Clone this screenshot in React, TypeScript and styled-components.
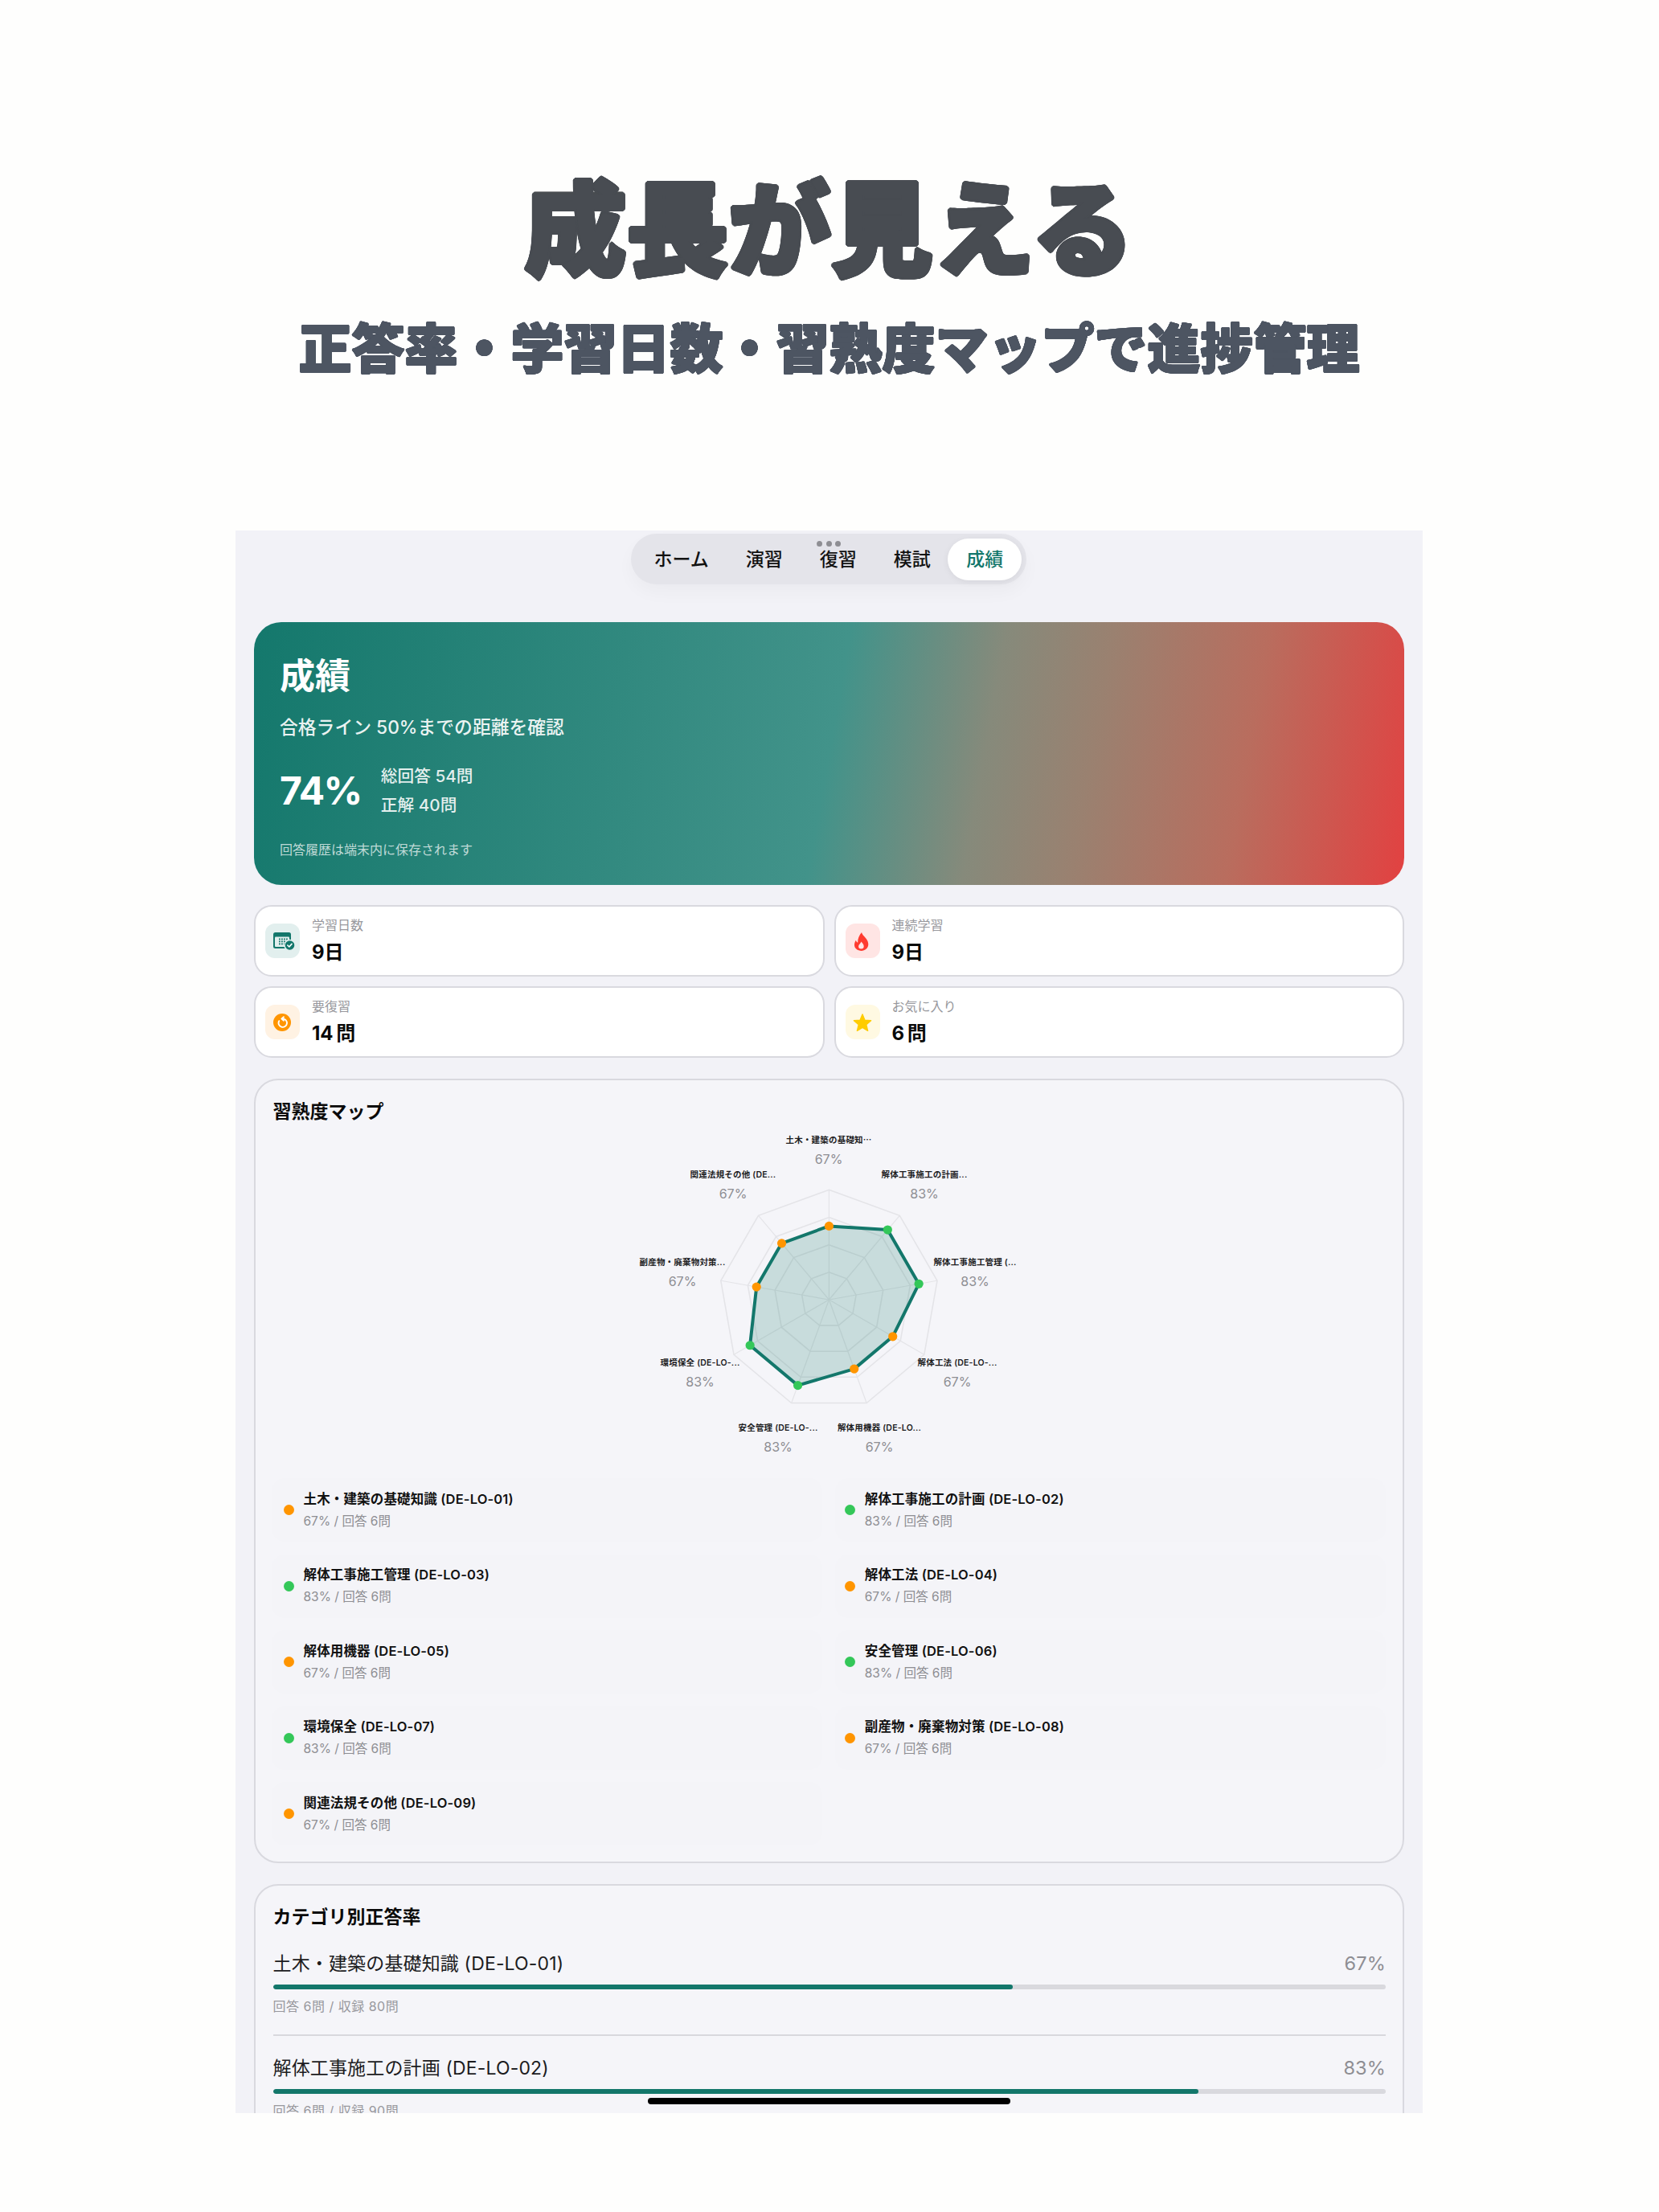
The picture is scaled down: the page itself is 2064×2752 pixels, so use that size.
import React from "react";
import styled, { createGlobalStyle } from "styled-components";

const FONT = `Inter, "Noto Sans CJK JP", sans-serif`;
const TEAL = "#13776b";
const GREEN = "#34c759";
const ORANGE = "#ff9500";

const ring = (r: number, color: string, n = 24) =>
  Array.from({ length: n }, (_, i) => {
    const a = (i / n) * Math.PI * 2;
    return `${(r * Math.cos(a)).toFixed(2)}px ${(r * Math.sin(a)).toFixed(2)}px 0 ${color}`;
  }).join(", ");

const Global = createGlobalStyle`
  html, body { margin: 0; padding: 0; background: #fefefd; }
  body { font-family: ${FONT}; color: #000; }
  * { box-sizing: border-box; }
`;

const Page = styled.div`
  width: 2064px;
  height: 2752px;
  padding-left: 293px;
  overflow: hidden;
`;
const Hero = styled.header`
  width: 1477px;
  height: 660px;
  padding-top: 208px;
  text-align: center;
  font-family: "Noto Sans CJK JP", sans-serif;
`;
const Headline = styled.h1`
  margin: 0;
  font-size: 127px;
  line-height: 140px;
  font-weight: 900;
  color: #484c52;
  text-shadow: ${ring(2.8, "#484c52")};
`;
const Subline = styled.h2`
  margin: 41px 0 0;
  font-size: 66px;
  line-height: 80px;
  font-weight: 900;
  color: #4d5562;
  text-shadow: ${ring(1.1, "#4d5562", 16)};
`;
const Screen = styled.main`
  position: relative;
  width: 1477px;
  height: 1969px;
  background: #f2f2f7;
  padding: 4px 23px 0 23px;
  overflow: hidden;
`;
const TabBar = styled.nav`
  position: relative;
  display: inline-flex;
  align-items: center;
  height: 63px;
  margin-left: 469px;
  padding: 0 6px 0 5.5px;
  border-radius: 32px;
  background: #e4e4ea;
  box-shadow: 0 10px 22px rgba(0, 0, 0, 0.03);
  vertical-align: top;
`;
const Tab = styled.span<{ $active?: boolean }>`
  display: block;
  height: 52px;
  margin-left: ${(p) => (p.$active ? "-1.5px" : "0")};
  padding: 0 23px;
  line-height: 52px;
  font-size: 23px;
  font-weight: 500;
  border-radius: 26px;
  color: ${(p) => (p.$active ? TEAL : "#111")};
  background: ${(p) => (p.$active ? "#fff" : "transparent")};
  box-shadow: ${(p) => (p.$active ? "0 2px 8px rgba(0,0,0,.06)" : "none")};
`;
const Dots = styled.span`
  position: absolute;
  left: 231px;
  top: 9px;
  display: flex;
  gap: 4.5px;
`;
const Dot = styled.i`
  width: 7px;
  height: 7px;
  border-radius: 50%;
  background: #8e8e93;
`;
const Banner = styled.section`
  margin-top: 47px;
  height: 327px;
  padding: 32px 32px;
  border-radius: 34px;
  color: #fff;
  background: linear-gradient(100deg, #14786c 0%, #42938a 50%, #868a7b 63%, #9a8170 72%, #b96d5e 85%, #e24141 100%);
`;
const BannerTitle = styled.h1`
  margin: 0;
  font-size: 44px;
  line-height: 70px;
  font-weight: 700;
`;
const BannerSub = styled.p`
  margin: 12px 0 0;
  font-size: 22.8px;
  line-height: 34px;
  font-weight: 500;
  color: rgba(255, 255, 255, 0.92);
`;
const BannerStats = styled.div`
  display: flex;
  align-items: center;
  gap: 24px;
  margin-top: 26px;
`;
const BigRate = styled.div`
  font-size: 48px;
  line-height: 72px;
  font-weight: 700;
  letter-spacing: -1.5px;
`;
const BannerCounts = styled.div`
  font-size: 20.7px;
  line-height: 36px;
  font-weight: 500;
  color: rgba(255, 255, 255, 0.88);
`;
const BannerNote = styled.p`
  margin: 25px 0 0;
  font-size: 16px;
  line-height: 24px;
  color: rgba(255, 255, 255, 0.72);
`;
const StatGrid = styled.section`
  display: grid;
  grid-template-columns: 1fr 1fr;
  gap: 12px;
  margin-top: 25px;
`;
const StatCard = styled.div`
  display: flex;
  align-items: center;
  gap: 15px;
  height: 89px;
  padding: 0 12px;
  background: #fff;
  border: 2px solid #d9d9df;
  border-radius: 22px;
`;
const IconBox = styled.div<{ $bg: string }>`
  flex: none;
  width: 43px;
  height: 43px;
  border-radius: 12px;
  background: ${(p) => p.$bg};
  svg {
    display: block;
  }
`;
const StatLabel = styled.div`
  font-size: 16px;
  line-height: 24px;
  color: #98989d;
`;
const StatValue = styled.div`
  margin-top: 5px;
  font-size: 24px;
  line-height: 34px;
  font-weight: 700;
  word-spacing: -2px;
  color: #0a0a0a;
`;
const Panel = styled.section`
  margin-top: 26px;
  padding: 24px 21px 20px 21.5px;
  background: #f5f5f9;
  border: 2px solid #d9d9df;
  border-radius: 30px;
`;
const PanelTitle = styled.h2`
  margin: 0;
  font-size: 23px;
  line-height: 30px;
  font-weight: 600;
  color: #0a0a0a;
`;
const RadarSvg = styled.svg`
  display: block;
  width: 540px;
  height: 441px;
  margin-left: 420.5px;
`;
const AxisName = styled.text`
  font-family: ${FONT};
  font-size: 10.5px;
  font-weight: 600;
  letter-spacing: 0.2px;
  fill: #1c1c1e;
  text-anchor: middle;
  dominant-baseline: central;
`;
const AxisRate = styled.text`
  font-family: ${FONT};
  font-size: 16px;
  fill: #8e8e93;
  text-anchor: middle;
  dominant-baseline: central;
`;
const TopicGrid = styled.div`
  display: grid;
  grid-template-columns: 1fr 1fr;
  column-gap: 16px;
  row-gap: 15.6px;
  margin: 0 0 0 -2px;
`;
const TopicItem = styled.div`
  display: flex;
  align-items: center;
  gap: 12px;
  height: 79px;
  padding: 0 15px;
  border-radius: 16px;
  background: #f4f4f8;
  &:nth-child(even) {
    padding-left: 12px;
  }
`;
const TopicDot = styled.span<{ $color: string }>`
  flex: none;
  width: 13px;
  height: 13px;
  border-radius: 50%;
  background: ${(p) => p.$color};
`;
const TopicName = styled.div`
  font-size: 16.5px;
  line-height: 27px;
  font-weight: 600;
  letter-spacing: 0.15px;
  color: #111;
`;
const TopicMeta = styled.div`
  font-size: 15.5px;
  line-height: 27px;
  color: #8e8e93;
`;
const CategoryRow = styled.div<{ $first?: boolean }>`
  padding: ${(p) => (p.$first ? "26px" : "23px")} 0 23px;
  border-bottom: 2px solid #d8d8dd;
`;
const CategoryHead = styled.div`
  display: flex;
  justify-content: space-between;
  font-size: 23px;
  line-height: 34px;
  letter-spacing: 0.15px;
`;
const CategoryName = styled.span`
  color: #1c1c1e;
`;
const CategoryRate = styled.span`
  font-size: 23.5px;
  color: #8e8e93;
`;
const Track = styled.div`
  height: 6px;
  margin-top: 9px;
  border-radius: 3px;
  background: #d9d9de;
  overflow: hidden;
`;
const Fill = styled.div`
  height: 100%;
  border-radius: 3px;
  background: ${TEAL};
`;
const CategoryMeta = styled.div`
  margin-top: 9px;
  font-size: 16px;
  line-height: 24px;
  letter-spacing: 0.5px;
  color: #98989d;
`;
const HomeBar = styled.div`
  position: absolute;
  left: 513px;
  top: 1950px;
  width: 451px;
  height: 8px;
  border-radius: 4px;
  background: #000;
`;

const CalendarIcon = () => (
  <svg width="43" height="43" viewBox="0 0 43 43">
    <rect x="10" y="11" width="22" height="20" rx="2.5" fill={TEAL} />
    <rect x="12" y="16.5" width="18" height="12.5" rx="1" fill="#e2efee" />
    {[0, 1, 2].map((r) =>
      [0, 1, 2, 3].map((c) => <rect key={`${r}${c}`} x={17 + c * 3} y={18.5 + r * 3} width="1.8" height="1.8" fill={TEAL} />)
    )}
    <circle cx="30.5" cy="27" r="6.5" fill={TEAL} stroke="#e2efee" strokeWidth="1.4" />
    <path d="M27.8 27l2 2 3.2-3.6" fill="none" stroke="#fff" strokeWidth="1.6" strokeLinecap="round" strokeLinejoin="round" />
  </svg>
);
const FlameIcon = () => (
  <svg width="43" height="43" viewBox="0 0 43 43">
    <path d="M20 11c.8 3.6 5 6 7 10 2.2 4.4 1.4 8-1 10.300-2 2-4.300 2.700-6.300 2.700s-5-.7-7-3c-2.500-3-2-7 .2-10.300.4 1.500 1.100 2.600 2.300 3.100C14.900 19 17 14.500 20 11z" fill="#ff3b30" />
    <path d="M19.600 22.500c.9 2 3.100 3 3.100 5.800a3.300 3.300 0 0 1-6.600 0c0-2.100 2.700-3.400 3.500-5.800z" fill="#ffe5e4" />
  </svg>
);
const RedoIcon = () => (
  <svg width="43" height="43" viewBox="0 0 43 43">
    <circle cx="21" cy="22" r="11" fill="#ff9500" />
    <path d="M17.200 20.200a5.200 5.200 0 1 0 4.200-2.700" fill="none" stroke="#fff" strokeWidth="1.900" strokeLinecap="round" />
    <path d="M23 15.300l-2.600 2.200 2.600 2.200" fill="none" stroke="#fff" strokeWidth="1.900" strokeLinecap="round" strokeLinejoin="round" />
  </svg>
);
const StarIcon = () => (
  <svg width="43" height="43" viewBox="0 0 43 43">
    <path
      d="M21 12l3 7.200 7.600.6-5.800 5 1.800 7.500L21 28.300l-6.600 4 1.800-7.500-5.800-5 7.600-.6z"
      fill="#ffcc00"
      stroke="#ffcc00"
      strokeWidth="1.400"
      strokeLinejoin="round"
    />
  </svg>
);

const stats = [
  { label: "学習日数", value: "9日", bg: "#e2efee", icon: <CalendarIcon /> },
  { label: "連続学習", value: "9日", bg: "#ffe5e4", icon: <FlameIcon /> },
  { label: "要復習", value: "14 問", bg: "#fff2e3", icon: <RedoIcon /> },
  { label: "お気に入り", value: "6 問", bg: "#fff9e2", icon: <StarIcon /> },
];

const topics = [
  { name: "土木・建築の基礎知識 (DE-LO-01)", rate: 67 },
  { name: "解体工事施工の計画 (DE-LO-02)", rate: 83 },
  { name: "解体工事施工管理 (DE-LO-03)", rate: 83 },
  { name: "解体工法 (DE-LO-04)", rate: 67 },
  { name: "解体用機器 (DE-LO-05)", rate: 67 },
  { name: "安全管理 (DE-LO-06)", rate: 83 },
  { name: "環境保全 (DE-LO-07)", rate: 83 },
  { name: "副産物・廃棄物対策 (DE-LO-08)", rate: 67 },
  { name: "関連法規その他 (DE-LO-09)", rate: 67 },
];

const CX = 271.4;
const CY = 219;
const R = 136.7;
const pt = (i: number, r: number): [number, number] => {
  const a = (i * 40 * Math.PI) / 180;
  return [CX + r * Math.sin(a), CY - r * Math.cos(a)];
};
const poly = (r: (i: number) => number) =>
  Array.from({ length: 9 }, (_, i) => pt(i, r(i)).map((n) => n.toFixed(1)).join(",")).join(" ");

const labels = [
  { t: "土木・建築の基礎知⋯", x: 271, y: 20.5 },
  { t: "解体工事施工の計画...", x: 390, y: 63.5 },
  { t: "解体工事施工管理 (...", x: 453, y: 172.5 },
  { t: "解体工法 (DE-LO-...", x: 431, y: 297.5 },
  { t: "解体用機器 (DE-LO...", x: 334, y: 378.5 },
  { t: "安全管理 (DE-LO-...", x: 208, y: 378.5 },
  { t: "環境保全 (DE-LO-...", x: 111, y: 297.5 },
  { t: "副産物・廃棄物対策...", x: 89, y: 172.5 },
  { t: "関連法規その他 (DE...", x: 152, y: 63.5 },
];

const Radar = () => (
  <RadarSvg viewBox="0 0 540 441">
    {[1, 2, 3, 4].map((k) => (
      <polygon key={k} points={poly(() => (R * k) / 4)} fill="none" stroke="#e4e4e8" strokeWidth="1.6" />
    ))}
    {topics.map((_, i) => {
      const [x, y] = pt(i, R);
      return <line key={i} x1={CX} y1={CY} x2={x} y2={y} stroke="#e4e4e8" strokeWidth="1.2" />;
    })}
    <polygon
      points={poly((i) => (R * topics[i].rate) / 100)}
      fill="rgba(19,119,107,.2)"
      stroke={TEAL}
      strokeWidth="4"
      strokeLinejoin="round"
    />
    {topics.map((t, i) => {
      const [x, y] = pt(i, (R * t.rate) / 100);
      return <circle key={i} cx={x} cy={y} r="5.6" fill={t.rate > 70 ? GREEN : ORANGE} />;
    })}
    {labels.map((l, i) => (
      <g key={i}>
        <AxisName x={l.x} y={l.y}>{l.t}</AxisName>
        <AxisRate x={l.x} y={l.y + 23}>{topics[i].rate}%</AxisRate>
      </g>
    ))}
  </RadarSvg>
);

const categories = [
  { name: "土木・建築の基礎知識 (DE-LO-01)", rate: 67, width: 66.5, meta: "回答 6問 / 収録 80問" },
  { name: "解体工事施工の計画 (DE-LO-02)", rate: 83, width: 83.2, meta: "回答 6問 / 収録 90問" },
];

export default function App() {
  return (
    <Page>
      <Global />
      <Hero>
        <Headline>成長が見える</Headline>
        <Subline>正答率・学習日数・習熟度マップで進捗管理</Subline>
      </Hero>
      <Screen>
        <TabBar>
          <Tab>ホーム</Tab>
          <Tab>演習</Tab>
          <Tab>復習</Tab>
          <Tab>模試</Tab>
          <Tab $active>成績</Tab>
          <Dots>
            <Dot />
            <Dot />
            <Dot />
          </Dots>
        </TabBar>
        <Banner>
          <BannerTitle>成績</BannerTitle>
          <BannerSub>合格ライン 50%までの距離を確認</BannerSub>
          <BannerStats>
            <BigRate>74%</BigRate>
            <BannerCounts>
              <div>総回答 54問</div>
              <div>正解 40問</div>
            </BannerCounts>
          </BannerStats>
          <BannerNote>回答履歴は端末内に保存されます</BannerNote>
        </Banner>
        <StatGrid>
          {stats.map((s) => (
            <StatCard key={s.label}>
              <IconBox $bg={s.bg}>{s.icon}</IconBox>
              <div>
                <StatLabel>{s.label}</StatLabel>
                <StatValue>{s.value}</StatValue>
              </div>
            </StatCard>
          ))}
        </StatGrid>
        <Panel>
          <PanelTitle>習熟度マップ</PanelTitle>
          <Radar />
          <TopicGrid>
            {topics.map((t) => (
              <TopicItem key={t.name}>
                <TopicDot $color={t.rate > 70 ? GREEN : ORANGE} />
                <div>
                  <TopicName>{t.name}</TopicName>
                  <TopicMeta>{t.rate}% / 回答 6問</TopicMeta>
                </div>
              </TopicItem>
            ))}
          </TopicGrid>
        </Panel>
        <Panel>
          <PanelTitle>カテゴリ別正答率</PanelTitle>
          {categories.map((c, i) => (
            <CategoryRow key={c.name} $first={i === 0}>
              <CategoryHead>
                <CategoryName>{c.name}</CategoryName>
                <CategoryRate>{c.rate}%</CategoryRate>
              </CategoryHead>
              <Track>
                <Fill style={{ width: `${c.width}%` }} />
              </Track>
              <CategoryMeta>{c.meta}</CategoryMeta>
            </CategoryRow>
          ))}
        </Panel>
        <HomeBar />
      </Screen>
    </Page>
  );
}
